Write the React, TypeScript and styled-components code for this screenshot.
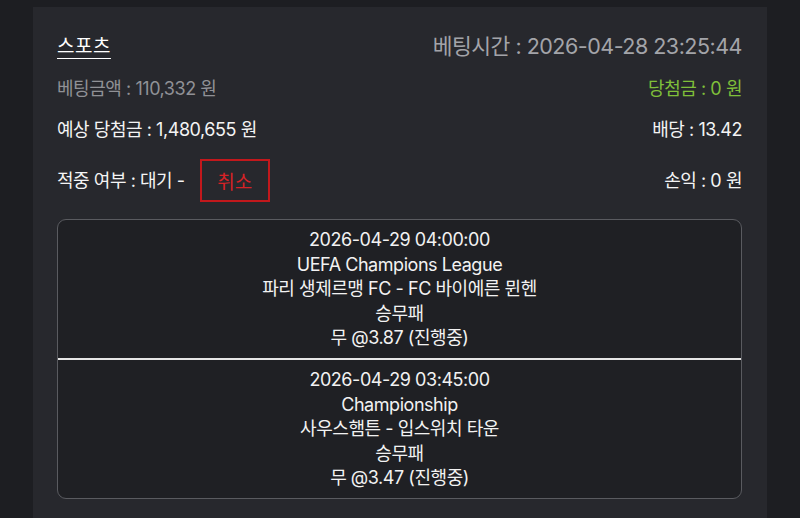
import React from "react";
import styled, {createGlobalStyle} from "styled-components";

type GameType = {
    time: string
    league: string
    teams: string
    market: string
    pick: string
}

const games: GameType[] = [
    {
        time: '2026-04-29 04:00:00',
        league: 'UEFA Champions League',
        teams: '파리 생제르맹 FC - FC 바이에른 뮌헨',
        market: '승무패',
        pick: '무 @3.87 (진행중)'
    },
    {
        time: '2026-04-29 03:45:00',
        league: 'Championship',
        teams: '사우스햄튼 - 입스위치 타운',
        market: '승무패',
        pick: '무 @3.47 (진행중)'
    },
]

const App = () => {
    return (
        <>
            <GlobalStyle/>
            <Page>
                <Card>
                    <Header>
                        <Title>스포츠</Title>
                        <BetTime>베팅시간 : 2026-04-28 23:25:44</BetTime>
                    </Header>
                    <Row>
                        <Text tone="muted">베팅금액 : 110,332 원</Text>
                        <Text tone="green">당첨금 : 0 원</Text>
                    </Row>
                    <Row>
                        <Text>예상 당첨금 : 1,480,655 원</Text>
                        <Text>배당 : 13.42</Text>
                    </Row>
                    <Row>
                        <Status>
                            <Text>적중 여부 : 대기 -</Text>
                            <CancelButton>취소</CancelButton>
                        </Status>
                        <Text>손익 : 0 원</Text>
                    </Row>
                    <GameList>
                        {games.map((g, i) =>
                            <GameItem key={i + g.time}>
                                <div>{g.time}</div>
                                <div>{g.league}</div>
                                <div>{g.teams}</div>
                                <div>{g.market}</div>
                                <div>{g.pick}</div>
                            </GameItem>)}
                    </GameList>
                </Card>
            </Page>
        </>
    )
}

export default App

//styled-components
const GlobalStyle = createGlobalStyle`
  html, body {
    margin: 0;
    padding: 0;
    background: #1d1e22;
  }
  body {
    font-family: Inter, "Noto Sans CJK KR", sans-serif;
    color: #f2f2f2;
  }
`
const Page = styled.div`
  width: 800px;
  height: 518px;
  overflow: hidden;
  padding-top: 7px;
  box-sizing: border-box;
`
const Card = styled.div`
  margin-left: 33px;
  width: 734px;
  min-height: 520px;
  box-sizing: border-box;
  background: #27282d;
  padding: 22px 25px 0 24px;
  display: flex;
  flex-direction: column;
  gap: 17px;
`
const Header = styled.div`
  display: flex;
  justify-content: space-between;
  align-items: center;
  height: 31px;
`
const Title = styled.div`
  font-size: 19px;
  font-weight: 400;
  color: #ffffff;
  text-decoration: underline;
  text-decoration-thickness: 1px;
  text-underline-offset: 5px;
  letter-spacing: 0.5px;
`
const BetTime = styled.div`
  font-size: 21.5px;
  color: #a3a4a9;
  letter-spacing: -0.5px;
`
const Row = styled.div`
  display: flex;
  justify-content: space-between;
  align-items: center;
  min-height: 24px;
`
type TextProps = { tone?: 'muted' | 'green' }
const Text = styled.div<TextProps>`
  font-size: 18px;
  line-height: 24px;
  letter-spacing: -0.45px;
  color: ${props => props.tone === 'muted' ? '#909196' : props.tone === 'green' ? '#7fbf3a' : '#f4f4f4'};
`
const Status = styled.div`
  display: flex;
  align-items: center;
  gap: 15px;
`
const CancelButton = styled.button`
  width: 70px;
  height: 43px;
  background: transparent;
  border: 2px solid #c2181c;
  color: #d62226;
  font-family: Inter, "Noto Sans CJK KR", sans-serif;
  font-size: 19px;
  padding: 0;
`
const GameList = styled.div`
  background: #1f2024;
  border: 1.5px solid #5a5b60;
  border-radius: 9px;
  overflow: hidden;
`
const GameItem = styled.div`
  display: flex;
  flex-direction: column;
  align-items: center;
  padding: 8px 0 7px;
  font-size: 18px;
  line-height: 24.6px;
  letter-spacing: -0.45px;
  color: #f2f2f2;
  & + & {
    border-top: 2px solid #e6e6e6;
  }
`
